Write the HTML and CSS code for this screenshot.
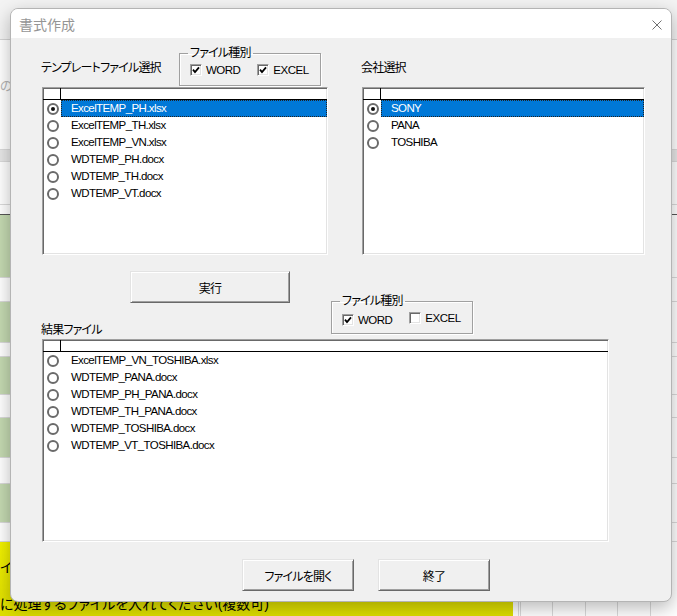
FILE: index.html
```html
<!DOCTYPE html>
<html lang="ja">
<head>
  <meta charset="UTF-8" />
  <meta name="viewport" content="width=device-width, initial-scale=1.0" />
  <title>書式作成</title>
  <link rel="stylesheet" href="styles.css">
</head>
<body>
  <!-- worksheet behind the form -->
  <div class="sheet">
    <div class="row r-bar"></div>
    <div class="row r-notes">
      <p class="note">の選択方法</p>
      <p class="note">ルール</p>
    </div>
    <div class="row r-head"></div>
    <div class="row r-blank"></div>
    <div class="row r-cols"><div class="fill"></div><div class="grid"></div></div>
    <div class="row r-g1"><div class="fill green"></div><div class="grid"></div></div>
    <div class="row r-w1"><div class="fill"></div><div class="grid"></div></div>
    <div class="row r-g2"><div class="fill green"></div><div class="grid"></div></div>
    <div class="row r-w2"><div class="fill"></div><div class="grid"></div></div>
    <div class="row r-g3"><div class="fill green"></div><div class="grid"></div></div>
    <div class="row r-w3"><div class="fill"></div><div class="grid"></div></div>
    <div class="row r-g4"><div class="fill green"></div><div class="grid"></div></div>
    <div class="row r-w4"><div class="fill"></div><div class="grid"></div></div>
    <div class="row r-g5"><div class="fill green"></div><div class="grid"></div></div>
    <div class="row r-w5"><div class="fill"></div><div class="grid"></div></div>
    <div class="row r-yellow">
      <div class="fill yellow">
        <p class="memo memo-1">イル</p>
        <p class="memo memo-2">に処理するファイルを入れてください(複数可)</p>
      </div>
      <div class="grid"></div>
    </div>
  </div>

  <div class="dialog">
    <div class="titlebar">
      <span class="title">書式作成</span>
      <svg class="close" width="10" height="10" viewBox="0 0 10 10">
        <path d="M0.5 0.5 L9.5 9.5 M9.5 0.5 L0.5 9.5" stroke="#707070" stroke-width="1" fill="none" />
      </svg>
    </div>

    <div class="form">
      <div class="pickers">
        <div class="picker picker-tpl">
          <div class="picker-head">
            <span class="label label-tpl">テンプレートファイル選択</span>
            <fieldset class="frame">
              <legend>ファイル種別</legend>
              <label class="check"><span class="box"><svg width="8" height="8" viewBox="0 0 8 8"><path d="M1 3.6 L3 6 L7 1.4" fill="none" stroke="#000" stroke-width="1.8" /></svg></span>WORD</label>
              <label class="check"><span class="box"><svg width="8" height="8" viewBox="0 0 8 8"><path d="M1 3.6 L3 6 L7 1.4" fill="none" stroke="#000" stroke-width="1.8" /></svg></span>EXCEL</label>
            </fieldset>
          </div>
          <div class="list list-tpl">
            <div class="list-head"><span class="head-mark"></span></div>
            <div class="item sel"><span class="mark"><span class="radio"></span></span><span class="name">ExcelTEMP_PH.xlsx</span></div>
            <div class="item"><span class="mark"><span class="radio"></span></span><span class="name">ExcelTEMP_TH.xlsx</span></div>
            <div class="item"><span class="mark"><span class="radio"></span></span><span class="name">ExcelTEMP_VN.xlsx</span></div>
            <div class="item"><span class="mark"><span class="radio"></span></span><span class="name">WDTEMP_PH.docx</span></div>
            <div class="item"><span class="mark"><span class="radio"></span></span><span class="name">WDTEMP_TH.docx</span></div>
            <div class="item"><span class="mark"><span class="radio"></span></span><span class="name">WDTEMP_VT.docx</span></div>
          </div>
        </div>

        <div class="picker picker-co">
          <div class="picker-head">
            <span class="label">会社選択</span>
          </div>
          <div class="list list-co">
            <div class="list-head"><span class="head-mark"></span></div>
            <div class="item sel"><span class="mark"><span class="radio"></span></span><span class="name">SONY</span></div>
            <div class="item"><span class="mark"><span class="radio"></span></span><span class="name">PANA</span></div>
            <div class="item"><span class="mark"><span class="radio"></span></span><span class="name">TOSHIBA</span></div>
          </div>
        </div>
      </div>

      <div class="mid">
        <div class="mid-left">
          <button class="btn btn-run">実行</button>
          <span class="label label-result">結果ファイル</span>
        </div>
        <fieldset class="frame frame-result">
          <legend>ファイル種別</legend>
          <label class="check"><span class="box"><svg width="8" height="8" viewBox="0 0 8 8"><path d="M1 3.6 L3 6 L7 1.4" fill="none" stroke="#000" stroke-width="1.8" /></svg></span>WORD</label>
          <label class="check"><span class="box"></span>EXCEL</label>
        </fieldset>
      </div>

      <div class="list list-result">
        <div class="list-head"><span class="head-mark"></span></div>
        <div class="item"><span class="mark"><span class="radio"></span></span><span class="name">ExcelTEMP_VN_TOSHIBA.xlsx</span></div>
        <div class="item"><span class="mark"><span class="radio"></span></span><span class="name">WDTEMP_PANA.docx</span></div>
        <div class="item"><span class="mark"><span class="radio"></span></span><span class="name">WDTEMP_PH_PANA.docx</span></div>
        <div class="item"><span class="mark"><span class="radio"></span></span><span class="name">WDTEMP_TH_PANA.docx</span></div>
        <div class="item"><span class="mark"><span class="radio"></span></span><span class="name">WDTEMP_TOSHIBA.docx</span></div>
        <div class="item"><span class="mark"><span class="radio"></span></span><span class="name">WDTEMP_VT_TOSHIBA.docx</span></div>
      </div>

      <div class="actions">
        <button class="btn btn-open">ファイルを開く</button>
        <button class="btn btn-quit">終了</button>
      </div>
    </div>
  </div>
</body>
</html>
```

FILE: styles.css
```css
* {
  box-sizing: border-box;
}

html, body {
  margin: 0;
}

body {
  width: 677px;
  height: 616px;
  overflow: hidden;
  position: relative;
  font-family: "Liberation Sans", "Noto Sans CJK JP", sans-serif;
  font-size: 12px;
  font-feature-settings: "palt";
  color: #000;
  background: #fff;
}

/* ---- worksheet ---- */

.sheet {
  display: flex;
  flex-direction: column;
  height: 616px;
}

.row {
  display: flex;
  flex: none;
  border-bottom: 1px solid #dadada;
}

.fill {
  width: 513px;
  flex: none;
}

.grid {
  flex: 1;
  background: repeating-linear-gradient(90deg, #dadada 0 1px, transparent 1px 32.5px);
  background-position: 7px 0;
}

.green {
  background: #c4d9b1;
}

.yellow {
  background: linear-gradient(#f2f200, #dede00);
}

.r-bar { height: 40px; background: #f3f3f3; border-bottom-color: #d4d4d4; }
.r-notes { height: 110px; padding-top: 34px; }
.r-head { height: 12px; background: #e6e6e6; }
.r-blank { height: 43px; }
.r-cols { height: 10px; border-bottom-color: #555; }
.r-g1 { height: 63px; }
.r-w1 { height: 24px; }
.r-g2 { height: 41px; }
.r-w2 { height: 14px; }
.r-g3 { height: 38px; }
.r-w3 { height: 23px; }
.r-g4 { height: 40px; }
.r-w4 { height: 26px; }
.r-g5 { height: 39px; }
.r-w5 { height: 19px; }
.r-yellow { height: 74px; border-bottom: none; }

.note {
  margin: 0;
  font-size: 13px;
  line-height: 24px;
  color: #b4b4b4;
}

.memo {
  margin: 0;
  font-size: 14px;
  white-space: nowrap;
}

.memo-1 {
  margin-top: 14px;
}

.memo-2 {
  margin-top: 17px;
}

/* ---- form window ---- */

.dialog {
  position: absolute;
  left: 10px;
  top: 8px;
  width: 662px;
  height: 594px;
  background: #f0f0f0;
  border: 1px solid #b4b4b4;
  border-radius: 8px;
  box-shadow: 0 6px 18px rgba(0, 0, 0, 0.28);
  overflow: hidden;
}

.titlebar {
  height: 29px;
  background: #fff;
  display: flex;
  align-items: center;
  justify-content: space-between;
  padding: 0 9px 0 8px;
}

.title {
  font-family: "Noto Sans CJK JP", sans-serif;
  font-size: 14px;
  color: #959595;
  padding-top: 1px;
}

.close {
  margin-top: 2px;
}

.form {
  padding: 8px 0 0 31px;
}

.pickers {
  display: flex;
  gap: 34px;
}

.picker-tpl {
  width: 286px;
}

.picker-co {
  width: 283px;
}

.picker-head {
  height: 41px;
  display: flex;
  align-items: flex-end;
}

.label {
  line-height: 14px;
  margin: 0 0 12px -1px;
  letter-spacing: -0.8px;
  white-space: nowrap;
}

.label-tpl {
  width: 138px;
  flex: none;
}

/* group box with etched edge */
.frame {
  margin: 0 0 1px 0;
  padding: 3px 0 0 8px;
  width: 142px;
  height: 40px;
  border: 1px solid #a0a0a0;
  box-shadow: inset 1px 1px 0 #fff, 1px 1px 0 #fff;
  white-space: nowrap;
}

.frame legend {
  padding: 0 2px;
  font-size: 12px;
  line-height: 14px;
  letter-spacing: -0.8px;
}

.check {
  display: inline-flex;
  align-items: center;
  width: 64px;
  font-size: 11.5px;
  line-height: 14px;
  letter-spacing: -0.5px;
}

.box {
  width: 12px;
  height: 12px;
  margin: 0 4px 0 2px;
  background: #fff;
  border: 1px solid;
  border-color: #a0a0a0 #fff #fff #a0a0a0;
  box-shadow: inset 1px 1px 0 #696969, inset -1px -1px 0 #e3e3e3;
  display: flex;
  align-items: center;
  justify-content: center;
}

/* list boxes */
.list {
  background: #fff;
  border: 1px solid;
  border-color: #a0a0a0 #fff #fff #a0a0a0;
  box-shadow: inset 1px 1px 0 #696969, inset -1px -1px 0 #e3e3e3;
  overflow: hidden;
}

.list-tpl {
  width: 286px;
  height: 168px;
}

.list-co {
  width: 283px;
  height: 168px;
}

.list-result {
  width: 567px;
  height: 203px;
}

.list-head {
  height: 12px;
  border-bottom: 1px solid #000;
}

.head-mark {
  display: block;
  width: 18px;
  height: 11px;
  border-right: 1px solid #000;
}

.item {
  display: flex;
  height: 17px;
}

.mark {
  width: 18px;
  flex: none;
  display: flex;
  align-items: center;
  justify-content: center;
  padding-left: 1px;
}

.radio {
  width: 12px;
  height: 12px;
  border: 2px solid #6a6a6a;
  border-radius: 50%;
  background: #fff;
  display: flex;
  align-items: center;
  justify-content: center;
}

.sel .radio::after {
  content: "";
  width: 4px;
  height: 4px;
  border-radius: 50%;
  background: #111;
}

.name {
  flex: 1;
  padding-left: 10px;
  font-size: 11.5px;
  line-height: 17px;
  letter-spacing: -0.6px;
  white-space: nowrap;
}

.sel .name {
  background: #0078d7;
  color: #fff;
  outline: 1px dotted #222;
  outline-offset: -1px;
}

/* middle row: run button, result label, second group box */
.mid {
  display: flex;
  align-items: flex-end;
}

.mid-left {
  width: 286px;
  display: flex;
  flex-direction: column;
  align-items: flex-start;
}

.btn {
  font: inherit;
  color: #000;
  background: #f0f0f0;
  border: 1px solid;
  border-color: #e3e3e3 #696969 #696969 #e3e3e3;
  box-shadow: inset 1px 1px 0 #fff, inset -1px -1px 0 #a0a0a0;
  padding: 0;
  letter-spacing: -0.8px;
}

.btn-run {
  width: 160px;
  height: 32px;
  margin: 16px 0 0 88px;
}

.label-result {
  margin: 20px 0 2px -1px;
}

.frame-result {
  margin: 0 0 5px 3px;
}

.actions {
  display: flex;
  gap: 24px;
  margin: 17px 0 0 200px;
}

.btn-open,
.btn-quit {
  width: 112px;
  height: 32px;
}
```
